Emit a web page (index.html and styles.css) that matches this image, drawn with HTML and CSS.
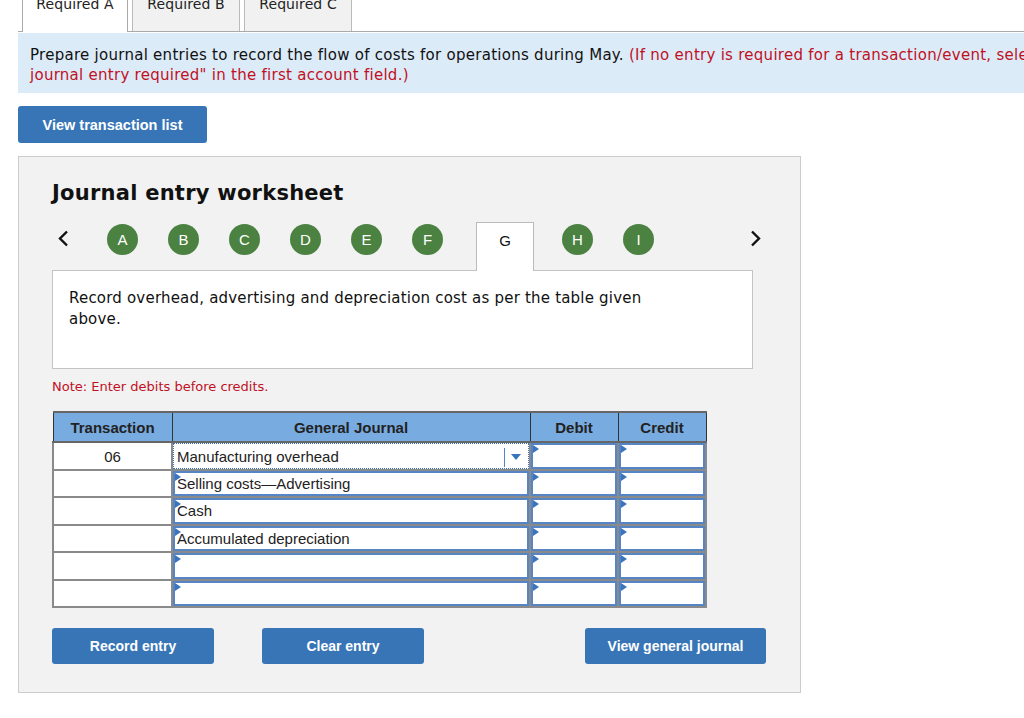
FILE: index.html
```html
<!DOCTYPE html>
<html lang="en">
<head>
  <meta charset="UTF-8" />
  <title>Journal entry worksheet</title>
  <link rel="stylesheet" href="styles.css">
</head>
<body>

  <div class="tabs">
    <div class="tab active">Required A</div>
    <div class="tab">Required B</div>
    <div class="tab">Required C</div>
  </div>

  <div class="instructions">
    Prepare journal entries to record the flow of costs for operations during May.
    <span class="red">(If no entry is required for a transaction/event, select "No journal entry required" in the first account field.)</span>
  </div>

  <button class="btn btn-list">View transaction list</button>

  <div class="worksheet">
    <h2>Journal entry worksheet</h2>

    <div class="steps">
      <svg class="arrow" width="12" height="17" viewBox="0 0 12 17"><polyline points="10,1.5 3,8.5 10,15.5" fill="none" stroke="#111" stroke-width="2.4"/></svg>
      <span class="step">A</span>
      <span class="step">B</span>
      <span class="step">C</span>
      <span class="step">D</span>
      <span class="step">E</span>
      <span class="step">F</span>
      <span class="step-current">G</span>
      <span class="step step-h">H</span>
      <span class="step">I</span>
      <svg class="arrow arrow-right" width="12" height="17" viewBox="0 0 12 17"><polyline points="2,1.5 9,8.5 2,15.5" fill="none" stroke="#111" stroke-width="2.4"/></svg>
    </div>

    <div class="desc">
      Record overhead, advertising and depreciation cost as per the table given above.
    </div>

    <p class="note">Note: Enter debits before credits.</p>

    <table class="journal">
      <thead>
        <tr>
          <th class="col-trans">Transaction</th>
          <th class="col-acct">General Journal</th>
          <th class="col-amt">Debit</th>
          <th class="col-amt">Credit</th>
        </tr>
      </thead>
      <tbody>
        <tr>
          <td class="trans">06</td>
          <td><div class="field select">Manufacturing overhead<span class="caret"></span></div></td>
          <td><div class="field"></div></td>
          <td><div class="field"></div></td>
        </tr>
        <tr>
          <td class="trans"></td>
          <td><div class="field">Selling costs&mdash;Advertising</div></td>
          <td><div class="field"></div></td>
          <td><div class="field"></div></td>
        </tr>
        <tr>
          <td class="trans"></td>
          <td><div class="field">Cash</div></td>
          <td><div class="field"></div></td>
          <td><div class="field"></div></td>
        </tr>
        <tr>
          <td class="trans"></td>
          <td><div class="field">Accumulated depreciation</div></td>
          <td><div class="field"></div></td>
          <td><div class="field"></div></td>
        </tr>
        <tr>
          <td class="trans"></td>
          <td><div class="field"></div></td>
          <td><div class="field"></div></td>
          <td><div class="field"></div></td>
        </tr>
        <tr>
          <td class="trans"></td>
          <td><div class="field"></div></td>
          <td><div class="field"></div></td>
          <td><div class="field"></div></td>
        </tr>
      </tbody>
    </table>

    <div class="actions">
      <button class="btn">Record entry</button>
      <button class="btn">Clear entry</button>
      <button class="btn btn-wide">View general journal</button>
    </div>
  </div>

</body>
</html>
```

FILE: styles.css
```css
* { box-sizing: border-box; margin: 0; padding: 0; }
html { overflow: hidden; }
body {
  font-family: "DejaVu Sans", Verdana, sans-serif;
  background: #fff;
  color: #111;
  padding-left: 18px;
}

/* top tabs */
.tabs {
  display: flex;
  gap: 4px;
  margin-top: -14px;
  padding-left: 4px;
  border-bottom: 1px solid #aaa;
  height: 46px;
}
.tab {
  width: 108px;
  height: 45px;
  padding-top: 8px;
  text-align: center;
  font-size: 14px;
  line-height: 18px;
  letter-spacing: 0.1px;
  color: #222;
  background: #f1f1f1;
  border: 1px solid #bbb;
  border-bottom: none;
}
.tab.active {
  width: 106px;
  background: #fff;
  height: 46px;
  border-color: #aaa;
}

.instructions {
  width: 1100px;
  margin-top: 1px;
  height: 60px;
  padding: 13px 12px 0;
  background: #dcebf8;
  font-size: 15px;
  line-height: 19.5px;
  letter-spacing: 0.27px;
  color: #111;
}
.instructions .red { color: #c0111f; }

.btn {
  height: 36px;
  width: 162px;
  background: #3775b7;
  color: #fff;
  border: none;
  border-radius: 3px;
  font-family: "Liberation Sans", Arial, sans-serif;
  font-weight: bold;
  font-size: 14px;
}
.btn-list {
  display: block;
  width: 189px;
  height: 37px;
  margin-top: 13px;
  font-size: 14.5px;
}

.worksheet {
  width: 783px;
  margin-top: 13px;
  background: #f2f2f2;
  border: 1px solid #ccc;
  padding: 23px 33px 28px;
}
.worksheet h2 {
  font-size: 21px;
  line-height: 26px;
  font-weight: bold;
  letter-spacing: 0.25px;
  color: #111;
}

/* step navigation */
.steps {
  display: flex;
  align-items: flex-start;
  width: 701px;
  height: 48px;
  margin-top: 16px;
  position: relative;
  z-index: 1;
}
.arrow {
  display: block;
  margin-left: 5px;
  margin-top: 8px;
}
.step {
  width: 31px;
  height: 31px;
  border-radius: 50%;
  background: #4b8241;
  color: #fff;
  font-family: "Liberation Sans", Arial, sans-serif;
  font-size: 15px;
  line-height: 31px;
  text-align: center;
  margin-left: 30px;
  margin-top: 2px;
}
.steps .arrow + .step { margin-left: 38px; }
.step-current {
  width: 58px;
  height: 49px;
  margin-left: 33px;
  background: #fff;
  border: 1px solid #bbb;
  border-bottom: none;
  text-align: center;
  font-family: "Liberation Sans", Arial, sans-serif;
  font-size: 15px;
  padding-top: 9px;
}
.step-h { margin-left: 28px; }
.arrow-right { margin-left: auto; margin-right: -9px; }

.desc {
  width: 701px;
  height: 99px;
  background: #fff;
  border: 1px solid #c4c4c4;
  padding: 17px 90px 0 16px;
  font-size: 15px;
  line-height: 21px;
  letter-spacing: 0.2px;
  color: #111;
}

.note {
  margin-top: 10px;
  font-size: 13px;
  color: #c0111f;
}

/* journal table */
.journal {
  margin-top: 17px;
  width: 652px;
  table-layout: fixed;
  border-collapse: collapse;
  font-family: "Liberation Sans", Arial, sans-serif;
  font-size: 15px;
}
.journal th {
  height: 30px;
  background: #78abe0;
  color: #222;
  font-weight: bold;
  border: 1px solid #333;
  border-top: 2px solid #666;
  border-bottom: 2px solid #666;
}
.col-trans { width: 119px; }
.col-acct { width: 358px; }
.col-amt { width: 88px; }
.journal td {
  height: 27.5px;
  padding: 0;
  background: #fff;
  border: 2px solid #8a8a8a;
}
.journal td.trans {
  text-align: center;
  vertical-align: top;
  padding-top: 5px;
  color: #222;
}
.field {
  position: relative;
  height: 100%;
  border: 2px solid #5585c4;
  padding: 2px 0 0 2px;
  color: #222;
  white-space: nowrap;
}
.field::before {
  content: "";
  position: absolute;
  top: 0;
  left: 0;
  border-left: 6px solid #3a74bc;
  border-top: 4px solid transparent;
  border-bottom: 4px solid transparent;
}
.field.select {
  border: 1px dotted #3a74bc;
  padding: 4px 0 0 3px;
}
.field.select::before { display: none; }
.caret {
  position: absolute;
  right: 10px;
  top: 4px;
  height: 19px;
  width: 14px;
  border-left: 1px solid #5585c4;
}
.caret::after {
  content: "";
  position: absolute;
  left: 6px;
  top: 6px;
  border-top: 6px solid #3a74bc;
  border-left: 5px solid transparent;
  border-right: 5px solid transparent;
}

.actions {
  display: flex;
  margin-top: 20px;
  gap: 48px;
}
.actions .btn-wide { width: 181px; margin-left: auto; margin-right: 1px; }
```
